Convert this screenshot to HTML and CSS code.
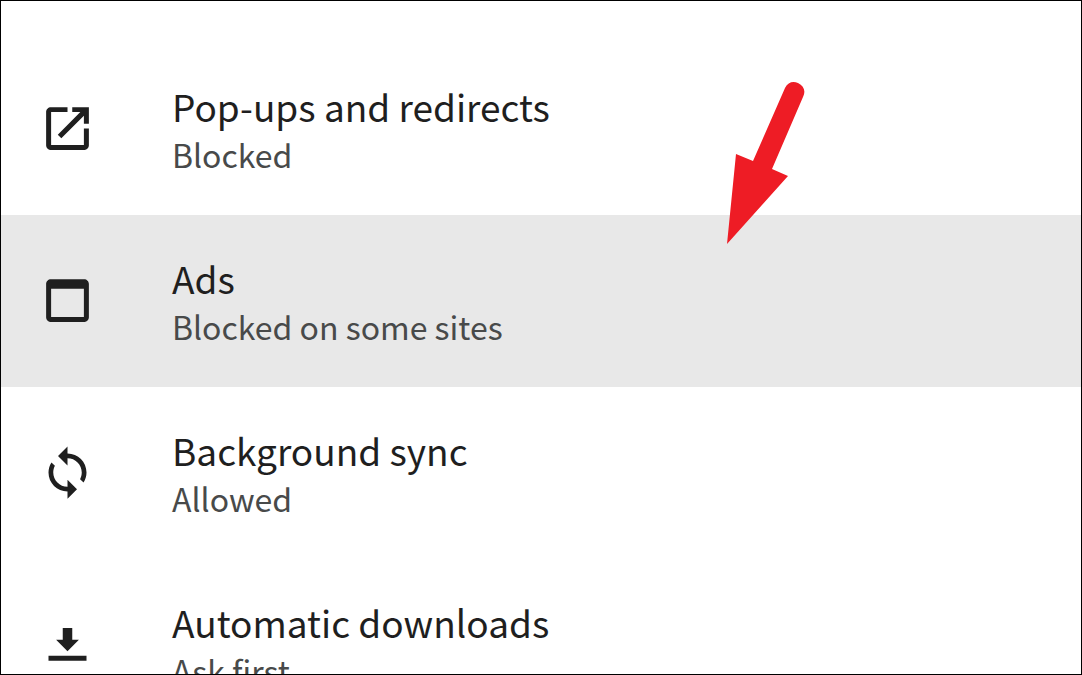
FILE: index.html
```html
<!DOCTYPE html>
<html lang="en">
<head>
  <meta charset="UTF-8">
  <meta name="viewport" content="width=device-width, initial-scale=1.0">
  <title>Site settings</title>
  <link rel="stylesheet" href="styles.css">
</head>
<body>
  <main class="screen">
    <ul class="settings">
      <li>
        <a class="setting" href="#popups">
          <svg class="icon" viewBox="0 0 24 24" aria-hidden="true">
            <path d="M12 3v2.1H5.1v13.8h13.8V12H21v7c0 1.100-.9 2-2 2H5c-1.100 0-2-.9-2-2V5c0-1.100.9-2 2-2z"/>
            <path d="M14 3h7v7h-2.100V6.600L9.400 16.100l-1.500-1.500L17.400 5.100H14z"/>
          </svg>
          <span class="text">
            <span class="title">Pop-ups and redirects</span>
            <span class="summary">Blocked</span>
          </span>
        </a>
      </li>
      <li>
        <a class="setting active" href="#ads">
          <svg class="icon" viewBox="0 0 24 24" aria-hidden="true">
            <path fill-rule="evenodd" d="M5 3h14c1.100 0 2 .9 2 2v14c0 1.100-.9 2-2 2H5c-1.100 0-2-.9-2-2V5c0-1.100.9-2 2-2zM5.100 7v11.900h13.800V7z"/>
          </svg>
          <span class="text">
            <span class="title">Ads</span>
            <span class="summary">Blocked on some sites</span>
          </span>
        </a>
      </li>
      <li>
        <a class="setting" href="#sync">
          <svg class="icon" viewBox="0 0 24 24" aria-hidden="true">
            <path d="M12 4V1L8 5l4 4V6c3.310 0 6 2.690 6 6 0 1.010-.25 1.970-.7 2.800l1.460 1.460C19.540 15.030 20 13.570 20 12c0-4.420-3.580-8-8-8zm0 14c-3.310 0-6-2.690-6-6 0-1.010.25-1.970.7-2.800L5.240 7.740C4.460 8.970 4 10.430 4 12c0 4.420 3.580 8 8 8v3l4-4-4-4v3z"/>
          </svg>
          <span class="text">
            <span class="title">Background sync</span>
            <span class="summary">Allowed</span>
          </span>
        </a>
      </li>
      <li>
        <a class="setting" href="#downloads">
          <svg class="icon" viewBox="0 0 24 24" aria-hidden="true">
            <path d="M10 5h4v5h2.800L12 14.800 7.200 10H10zM4 16.700h16v2.100H4z"/>
          </svg>
          <span class="text">
            <span class="title">Automatic downloads</span>
            <span class="summary">Ask first</span>
          </span>
        </a>
      </li>
    </ul>

    <!-- Arrow pointing at the Ads row -->
    <svg class="pointer" viewBox="0 0 78 163" aria-hidden="true">
      <path d="M58 6C61 0 66 -1 71 1C77 4 79 9 76 15L45 87L61 94L0 162L9 72L26 79Z"/>
    </svg>
  </main>
</body>
</html>
```

FILE: styles.css
```css
* {
  margin: 0;
  padding: 0;
  box-sizing: border-box;
}

body {
  font-family: "Noto Sans CJK SC", "Noto Sans", sans-serif;
  background-color: #fff;
  color: #1f1f1f;
}

.screen {
  position: relative;
  height: 100vh;
  padding-top: 42px;
  border: 1px solid #000;
  overflow: hidden;
}

.settings {
  list-style: none;
}

.setting {
  display: flex;
  align-items: center;
  gap: 76px;
  height: 172px;
  padding: 0 38px 2px;
  color: inherit;
  text-decoration: none;
}

.setting.active {
  background-color: #e8e8e8;
}

.icon {
  flex: none;
  width: 57px;
  height: 57px;
  fill: #1f1f1f;
}

.text {
  display: flex;
  flex-direction: column;
  padding-top: 4px;
}

.title {
  font-size: 37px;
  font-weight: 400;
  line-height: 48px;
}

.summary {
  font-size: 32px;
  line-height: 48px;
  color: #484a4a;
}

/* Red arrow over the list */
.pointer {
  position: absolute;
  top: 81px;
  left: 726px;
  width: 78px;
  height: 163px;
  fill: #ee1c25;
}
```
